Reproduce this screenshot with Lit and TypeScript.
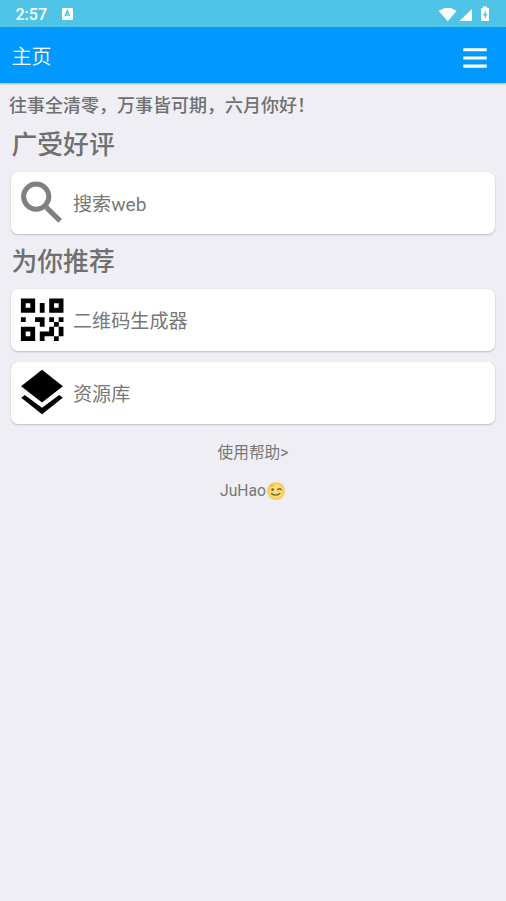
import { LitElement, html, css } from "lit";
import { customElement } from "lit/decorators.js";

const QR_ROWS = [
  "111000111",
  "101010101",
  "111010111",
  "000000000",
  "100110101",
  "000010010",
  "111000101",
  "101011101",
  "111010010",
];

const searchIcon = html`<svg class="icon" viewBox="0 0 44 44">
  <circle cx="16.2" cy="16.6" r="12.6" fill="none" stroke="#808080" stroke-width="5" />
  <path d="M25.2 28.4 28 25.6 42 39 38.3 42.8 25.2 30Z" fill="#808080" />
</svg>`;

const qrIcon = html`<svg class="icon" viewBox="0 0 44 44">
  <path
    d=${QR_ROWS.map((row, y) =>
      [...row].map((c, x) => (c === "1" ? `M${0.9 + x * 4.72} ${1.4 + y * 4.72}h4.82v4.82h-4.82z` : "")).join("")
    ).join("")}
  />
</svg>`;

const layersIcon = html`<svg class="icon" viewBox="0 0 44 44">
  <path d="M22 -.2 42.9 16.2 22 32.4 1.1 16.2Z" />
  <path d="M22 37.8 39.2 24.9 42.8 27.8 22 44.2 1.2 27.8 4.8 24.9Z" />
</svg>`;

@customElement("app-card")
class AppCard extends LitElement {
  static properties = { label: {}, icon: {} };
  static styles = css`
    :host {
      display: flex;
      flex: none;
      align-items: center;
      box-sizing: border-box;
      height: 62px;
      margin: 0 11px;
      padding-left: 9px;
      border-radius: 7px;
      background: #fff;
      box-shadow: 0 1px 2px rgba(0, 0, 0, 0.2), 0 0 1px rgba(0, 0, 0, 0.12);
    }
    .icon { width: 44px; height: 44px; display: block; overflow: visible; margin-top: -3px; }
    .label { margin: 3px 0 0 9px; font-size: 19.1px; line-height: 29px; color: #777; }
  `;
  declare label: string;
  declare icon: unknown;
  render() {
    return html`${this.icon}<span class="label">${this.label}</span>`;
  }
}

@customElement("app-root")
class AppRoot extends LitElement {
  static styles = css`
    :host {
      display: flex;
      flex-direction: column;
      height: 901px;
      overflow: hidden;
      background: #efeef4;
      color: #707070;
      font-family: Roboto, "Noto Sans CJK SC", sans-serif;
    }
    .status {
      flex: none;
      display: flex;
      align-items: center;
      box-sizing: border-box;
      height: 27px;
      padding: 2px 16px 0 15.5px;
      background: #50c4e6;
      color: #fff;
    }
    .time { font-size: 16px; font-weight: 500; line-height: 24px; width: 46px; }
    .notice { width: 11px; height: 12px; margin-top: -2px; }
    .signals { width: 52px; height: 16px; margin: -2px 0 0 auto; }
    .bar {
      flex: none;
      display: flex;
      align-items: center;
      justify-content: space-between;
      box-sizing: border-box;
      height: 56px;
      padding: 0 19px 0 11.5px;
      background: #0099ff;
      color: #fff;
      box-shadow: 0 1px 2px rgba(0, 0, 0, 0.25);
    }
    .bar-title { font-size: 20px; line-height: 28px; margin-top: 4px; font-weight: 350; }
    .menu { width: 24px; height: 20px; margin-top: 6px; }
    .message { margin: 10px 0 0 9px; font-size: 18px; line-height: 26px; font-weight: 500; white-space: nowrap; }
    .heading { margin: 7px 0 0 11.5px; font-size: 25.8px; line-height: 38px; font-weight: 500; }
    .first { margin-bottom: 8px; }
    .second { margin-top: 9px; margin-bottom: 8px; }
    .gap { margin-bottom: 11px; }
    .help { margin-top: 17px; text-align: center; font-size: 15.7px; line-height: 24px; color: #777; }
    .author { display: flex; justify-content: center; align-items: center; margin-top: 14px; font-size: 15.7px; line-height: 24px; color: #777; }
    .wink { width: 20px; height: 20px; }
  `;
  render() {
    return html`
      <div class="status">
        <span class="time">2:57</span>
        <svg class="notice" viewBox="0 0 11 12">
          <rect width="11" height="12" rx="1.2" fill="#fff" />
          <path d="M3 8.4 5.3 2.8 7.6 8.4M3.8 6.8H6.9" fill="none" stroke="#50c4e6" stroke-width="1.5" />
          <path d="M5.5 10.4H9.5" stroke="#a8e1f2" stroke-width=".8" />
        </svg>
        <svg class="signals" viewBox="0 0 52 16" fill="#fff">
          <path d="M.8 5Q9.8-1.4 18.6 5L9.7 15.2Z" />
          <path d="M34 3V15H21.5Z" />
          <path d="M44.5.6h4V2h1.2q.8 0 .8.8v11.4q0 .8-.8.8h-6.4q-.8 0-.8-.8V2.8q0-.8.8-.8h1.2z" transform="translate(.5)" />
          <path d="M47.9 4.2 45 9.3h1.7v3.8l2.6-5.2h-1.6z" fill="#50c4e6" />
        </svg>
      </div>
      <header class="bar">
        <span class="bar-title">主页</span>
        <svg class="menu" viewBox="0 0 24 20" fill="#fff">
          <path d="M.3.2h23.4v3.1H.3zM.3 8.4h23.4v3.1H.3zM.3 16.6h23.4v3.1H.3z" />
        </svg>
      </header>
      <div class="message">往事全清零，万事皆可期，六月你好！</div>
      <div class="heading first">广受好评</div>
      <app-card .icon=${searchIcon} .label=${"搜索web"}></app-card>
      <div class="heading second">为你推荐</div>
      <app-card class="gap" .icon=${qrIcon} .label=${"二维码生成器"}></app-card>
      <app-card .icon=${layersIcon} .label=${"资源库"}></app-card>
      <div class="help">使用帮助&gt;</div>
      <div class="author">
        <span>JuHao</span>
        <svg class="wink" viewBox="0 0 20 20">
          <defs>
            <radialGradient id="face"><stop offset=".5" stop-color="#fbe071" /><stop offset="1" stop-color="#f7c665" /></radialGradient>
          </defs>
          <circle cx="10" cy="10" r="9.1" fill="url(#face)" />
          <g fill="none" stroke="#76683f" stroke-width="1.4" stroke-linecap="round">
            <path d="M5.6 12.6Q9.6 15.8 13.8 12.4" />
            <path d="M11.6 8.6Q13.6 7 15.4 8.8" />
            <path d="M4.1 5.5Q5.5 4.1 7.2 4.3" stroke="#d3a247" stroke-width=".9" />
          </g>
          <ellipse cx="6.6" cy="8.5" rx="1.3" ry="1.5" fill="#76683f" />
        </svg>
      </div>
    `;
  }
}
